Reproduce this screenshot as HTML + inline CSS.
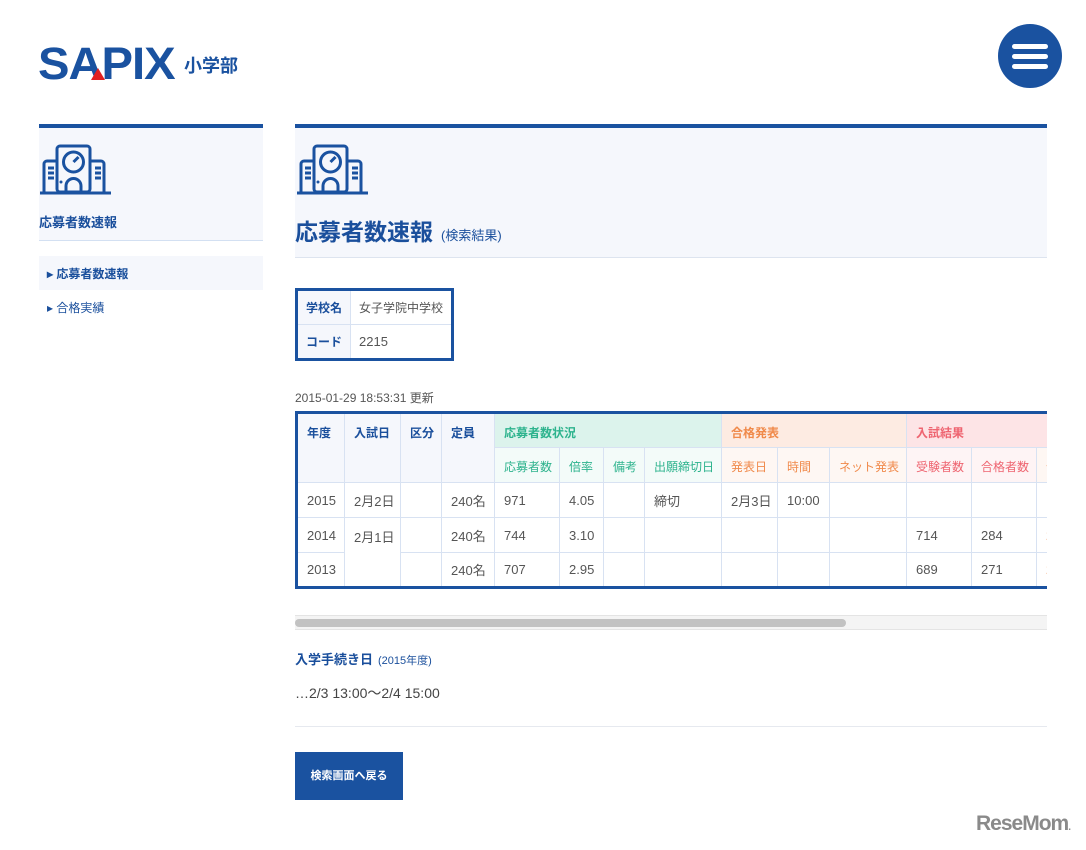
<!DOCTYPE html>
<html><head><meta charset="utf-8"><style>
*{box-sizing:border-box;margin:0;padding:0}
body{width:1086px;height:850px;background:#fff;font-family:"Liberation Sans","Noto Sans CJK JP",sans-serif;color:#444;position:relative;overflow:hidden}
.abs{position:absolute}
.blue{color:#1a4f9c}
.panel{background:#f5f7fc;border-top:4px solid #1a52a0}
table{border-collapse:collapse;table-layout:fixed}
td,th{border:1px solid #d8e2f2;font-size:12px;text-align:left;padding:0 9px;white-space:nowrap;overflow:hidden}
.dt th{height:35px;font-weight:bold;color:#1a4f9c;background:#f5f7fc;vertical-align:top;padding-top:10px}
.dt td{height:35px;font-size:13px;color:#555}
.g{background:#dcf3ec!important;color:#2db38d!important}
.o{background:#fdebe2!important;color:#f08a4b!important}
.r{background:#fde4e6!important;color:#ee6470!important}
.g2{background:#f3fbf9!important;color:#2db38d!important;font-weight:normal!important}
.o2{background:#fef7f3!important;color:#f08a4b!important;font-weight:normal!important}
.r2{background:#fef4f5!important;color:#ee6470!important;font-weight:normal!important}
</style></head><body>
<!-- logo -->
<div class="abs" style="left:38px;top:40px;font-weight:bold;font-size:45px;color:#1a52a0;letter-spacing:-1px;font-family:'Liberation Sans',sans-serif;transform:scaleX(1.05);transform-origin:left;line-height:48px">SAPIX</div>
<div class="abs" style="left:91px;top:68px;width:0;height:0;border-left:7px solid transparent;border-right:7px solid transparent;border-bottom:12px solid #e02020"></div>
<div class="abs" style="left:184px;top:52px;font-size:18px;font-weight:bold;color:#1a52a0">小学部</div>
<!-- menu -->
<div class="abs" style="left:998px;top:24px;width:64px;height:64px;border-radius:50%;background:#1a52a0"></div>
<div class="abs" style="left:1012px;top:44px;width:36px;height:5px;border-radius:3px;background:#fff"></div>
<div class="abs" style="left:1012px;top:54px;width:36px;height:5px;border-radius:3px;background:#fff"></div>
<div class="abs" style="left:1012px;top:64px;width:36px;height:5px;border-radius:3px;background:#fff"></div>

<svg width="0" height="0" style="position:absolute"><defs><g id="bld" fill="none" stroke="#1a52a0" stroke-width="3">
<rect x="17" y="2" width="33" height="46" rx="3"/><circle cx="33.5" cy="18" r="10"/><path d="M33.5 18l5-5"/>
<path d="M4 48V20a3 3 0 0 1 3-3h10M50 17h11a3 3 0 0 1 3 3v28"/>
<path d="M8 24h6M8 29h6M8 34h6M55 24h6M55 29h6M55 34h6"/>
<path d="M26 48v-6a7.5 7.5 0 0 1 15 0v6"/><path d="M0 49h71" stroke-width="3"/>
<circle cx="21" cy="38" r="1.5" fill="#1a52a0" stroke="none"/></g></defs></svg>

<!-- sidebar -->
<div class="abs panel" style="left:39px;top:124px;width:224px;height:117px;border-bottom:1px solid #d3e0f2"></div>
<svg class="abs" style="left:40px;top:144px" width="72" height="52"><use href="#bld"/></svg>
<div class="abs blue" style="left:39px;top:212px;font-size:13px;font-weight:bold">応募者数速報</div>
<div class="abs" style="left:39px;top:256px;width:224px;height:34px;background:#f5f7fc"></div>
<div class="abs blue" style="left:47px;top:265px;font-size:12px;font-weight:bold">▸ 応募者数速報</div>
<div class="abs blue" style="left:47px;top:299px;font-size:12px">▸ 合格実績</div>

<!-- main header -->
<div class="abs panel" style="left:295px;top:124px;width:752px;height:134px;border-bottom:1px solid #dde4ef"></div>
<svg class="abs" style="left:297px;top:144px" width="72" height="52"><use href="#bld"/></svg>
<div class="abs blue" style="left:295px;top:213px;font-size:23px;font-weight:bold">応募者数速報<span style="font-size:13px;font-weight:normal;margin-left:8px">(検索結果)</span></div>

<!-- school box -->
<table class="abs" style="left:295px;top:288px;border:3px solid #1a52a0">
<tr><th style="height:35px;width:54px;padding:0 8px;background:#f5f7fc;color:#1a4f9c;font-size:12px">学校名</th><td style="width:102px;padding:0 8px;font-size:12px;color:#555">女子学院中学校</td></tr>
<tr><th style="height:35px;padding:0 8px;background:#f5f7fc;color:#1a4f9c;font-size:12px">コード</th><td style="padding:0 8px;font-size:13px;color:#555">2215</td></tr>
</table>
<div class="abs" style="left:295px;top:389px;font-size:12px;color:#555">2015-01-29 18:53:31 更新</div>

<!-- data table -->
<div class="abs" style="left:295px;top:411px;width:752px;height:182px;overflow:hidden">
<table class="dt" style="border-top:3px solid #1a52a0;border-bottom:3px solid #1a52a0;border-left:3px solid #1a52a0;width:800px">
<colgroup><col style="width:48px"><col style="width:56px"><col style="width:41px"><col style="width:53px"><col style="width:65px"><col style="width:44px"><col style="width:41px"><col style="width:77px"><col style="width:56px"><col style="width:52px"><col style="width:77px"><col style="width:65px"><col style="width:65px"><col style="width:60px"></colgroup>
<tr><th rowspan="2">年度</th><th rowspan="2">入試日</th><th rowspan="2">区分</th><th rowspan="2">定員</th><th colspan="4" class="g">応募者数状況</th><th colspan="3" class="o">合格発表</th><th colspan="3" class="r">入試結果</th></tr>
<tr><th class="g2">応募者数</th><th class="g2">倍率</th><th class="g2">備考</th><th class="g2">出願締切日</th><th class="o2">発表日</th><th class="o2">時間</th><th class="o2">ネット発表</th><th class="r2">受験者数</th><th class="r2">合格者数</th><th class="o2">合</th></tr>
<tr><td>2015</td><td>2月2日</td><td></td><td>240名</td><td>971</td><td>4.05</td><td></td><td>締切</td><td>2月3日</td><td>10:00</td><td></td><td></td><td></td><td></td></tr>
<tr><td>2014</td><td rowspan="2" style="vertical-align:top;padding-top:9px">2月1日</td><td></td><td>240名</td><td>744</td><td>3.10</td><td></td><td></td><td></td><td></td><td></td><td>714</td><td>284</td><td style="color:#f08a4b">2</td></tr>
<tr><td>2013</td><td></td><td>240名</td><td>707</td><td>2.95</td><td></td><td></td><td></td><td></td><td></td><td>689</td><td>271</td><td style="color:#f08a4b">2</td></tr>
</table></div>
<!-- scrollbar -->
<div class="abs" style="left:295px;top:615px;width:752px;height:15px;background:#f4f4f4;border-top:1px solid #e4e4e4;border-bottom:1px solid #e4e4e4"></div>
<div class="abs" style="left:295px;top:619px;width:551px;height:8px;border-radius:4px;background:#c2c2c2"></div>

<div class="abs blue" style="left:295px;top:649px;font-size:13px;font-weight:bold">入学手続き日<span style="font-size:11px;font-weight:normal;color:#1a4f9c;margin-left:5px">(2015年度)</span></div>
<div class="abs" style="left:295px;top:683px;font-size:14px;color:#444">…2/3 13:00〜2/4 15:00</div>
<div class="abs" style="left:295px;top:726px;width:752px;height:1px;background:#e6e9ef"></div>
<div class="abs" style="left:295px;top:752px;width:108px;height:48px;background:#1a52a0;color:#fff;font-size:11px;font-weight:bold;text-align:center;line-height:48px">検索画面へ戻る</div>

<div class="abs" style="left:976px;top:812px;font-size:21px;font-weight:bold;color:#8a8a8a;letter-spacing:-1px">ReseMom<span style="font-size:10px">.</span></div>
</body></html>
